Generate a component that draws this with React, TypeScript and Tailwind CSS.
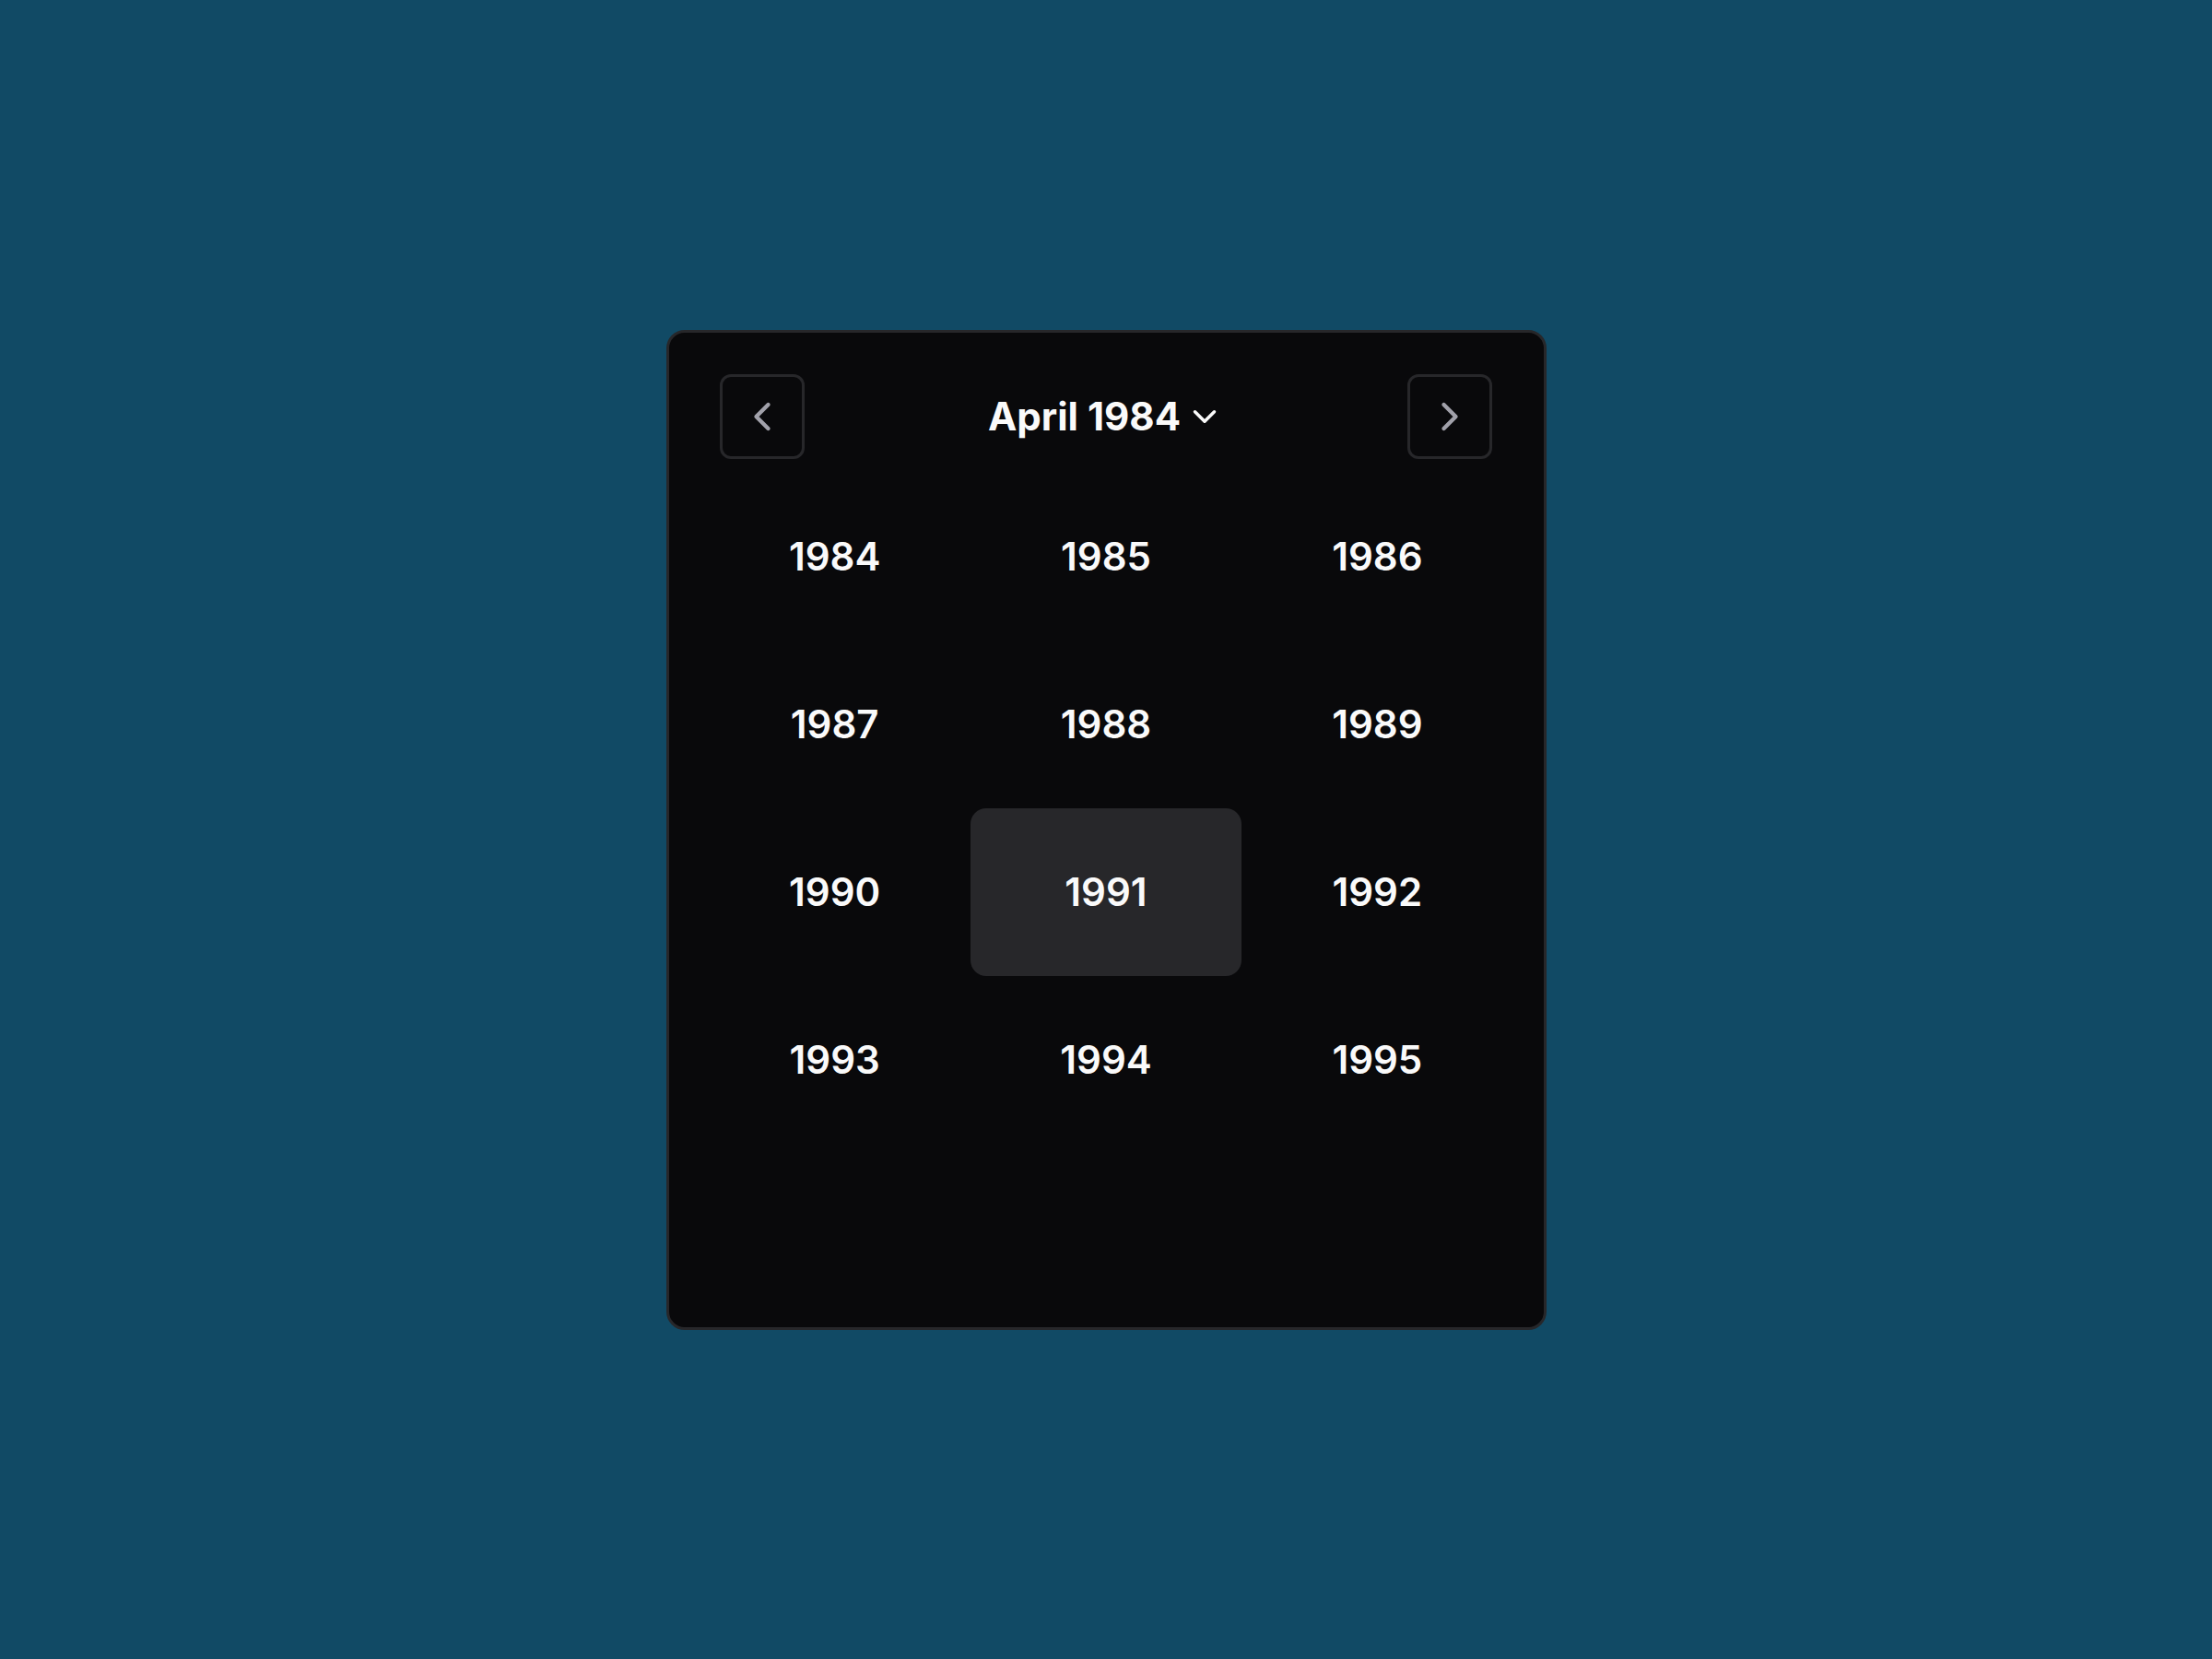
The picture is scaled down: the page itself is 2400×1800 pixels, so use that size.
import { ChevronDown, ChevronLeft, ChevronRight } from 'lucide-react';

const years = [1984, 1985, 1986, 1987, 1988, 1989, 1990, 1991, 1992, 1993, 1994, 1995];

export default function App() {
  const selected = 1991;

  return (
    <div className="flex h-screen w-full items-center justify-center bg-[#114a65] font-['Inter',sans-serif]">
      <div className="flex h-[1085px] w-[955px] flex-col rounded-[20px] border-[3px] border-[#27272a] bg-[#09090b] px-[33px]">
        {/* header */}
        <div className="mx-[22px] mt-[45px] flex items-center justify-between">
          <button className="flex h-[92px] w-[92px] items-center justify-center rounded-[12px] border-[3px] border-[#27272a] text-[#a1a1aa]">
            <ChevronLeft size={52} strokeWidth={2} />
          </button>
          <div className="flex items-center gap-[5px] text-[42px] font-bold text-[#fafafa]">
            <span>April 1984</span>
            <ChevronDown size={42} strokeWidth={2} />
          </div>
          <button className="flex h-[92px] w-[92px] items-center justify-center rounded-[12px] border-[3px] border-[#27272a] text-[#a1a1aa]">
            <ChevronRight size={52} strokeWidth={2} />
          </button>
        </div>

        {/* years */}
        <div className="mt-[15px] grid grid-cols-3">
          {years.map((y) => (
            <div
              key={y}
              className={`flex h-[182px] items-center justify-center rounded-[17px] text-[42px] font-semibold text-[#fafafa] ${y === selected ? 'bg-[#27272a]' : ''}`}
            >
              {y}
            </div>
          ))}
        </div>
      </div>
    </div>
  );
}
